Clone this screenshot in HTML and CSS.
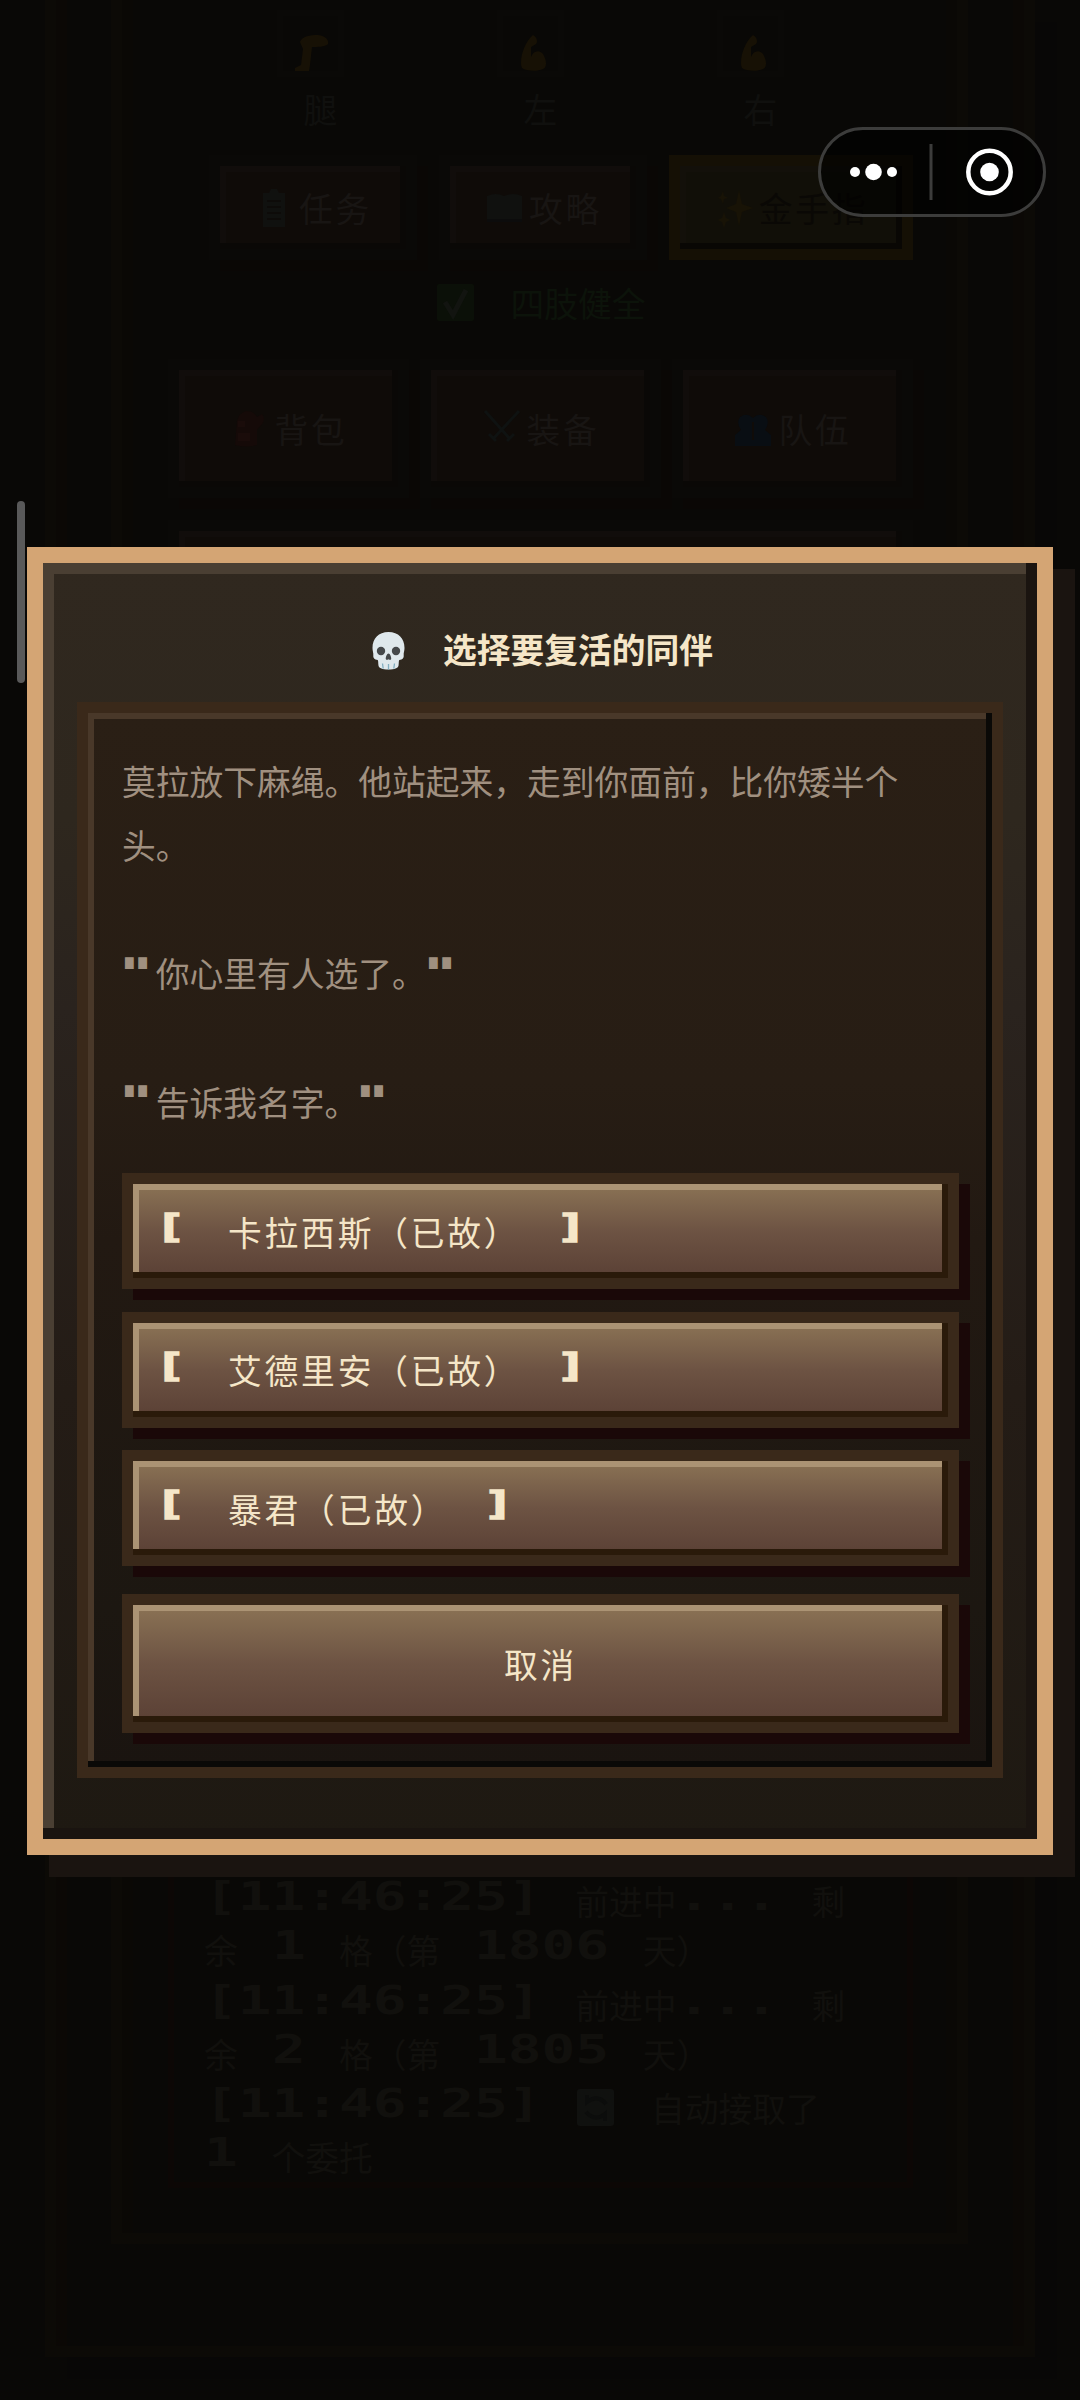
FILE: index.html
```html
<!DOCTYPE html>
<html lang="zh-CN">
<head>
<meta charset="utf-8">
<title>选择要复活的同伴</title>
<link rel="stylesheet" href="styles.css">
</head>
<body>
<div class="app">
  <main class="frame">
    <div class="frame-inner">
      <div class="limbs">
        <div class="limb"><div class="slot"><svg viewBox="0 0 36 36"><path fill="#171105" d="M1 36v-3l6-3 2-16-3-7C8 1 16 0 24 0c8 1 11 5 10 9-3 3-11 3-16 3l-2 18-1 6z"/></svg></div><span>腿</span></div>
        <div class="limb"><div class="slot"><svg viewBox="0 0 36 36"><path fill="#171105" d="M19 0c4 2 5 7 3 9l-5 3v10c2-6 8-8 12-3 4 7 4 13 0 15-6 3-17 2-21-1C5 26 9 9 19 0z"/></svg></div><span>左</span></div>
        <div class="limb"><div class="slot"><svg viewBox="0 0 36 36"><path fill="#171105" d="M19 0c4 2 5 7 3 9l-5 3v10c2-6 8-8 12-3 4 7 4 13 0 15-6 3-17 2-21-1C5 26 9 9 19 0z"/></svg></div><span>右</span></div>
      </div>
      <div class="tools">
        <div class="dim-btn"><svg class="emo" viewBox="0 0 42 40"><path fill="#10110f" d="M9 5h6l2-4h6l2 4h6v34H9z"/><path stroke="#0d0b09" stroke-width="2" d="M13 13h14M13 19h14M13 25h14M13 31h14"/></svg>任务</div>
        <div class="dim-btn"><svg class="emo" viewBox="0 0 42 40"><path fill="#10110f" d="M3 8q9-4 17 0 9-4 18 0v23H3z"/><path fill="#0c0c0c" d="M3 31h35v3H3z"/></svg>攻略</div>
        <div class="dim-btn gold"><svg class="emo" viewBox="0 0 42 40"><path fill="#181306" d="M25 2l3 14 11 4-11 4-3 14-3-14-10-4 10-4zM10 24l2 6 4 2-4 2-2 6-2-6-4-2 4-2zM9 3l1 5 4 2-4 1-1 5-2-5-3-1 3-2z"/></svg>金手指</div>
      </div>
      <div class="health"><svg class="emo" viewBox="0 0 42 40"><rect x="2" y="1" width="37" height="37" rx="2" fill="#0b1008"/><path d="M10 19l8 13L31 7" fill="none" stroke="#121410" stroke-width="5"/></svg>四肢健全</div>
      <div class="menu">
        <div class="dim-btn"><svg class="emo" viewBox="0 0 42 40"><path fill="#150a08" d="M8 12q2-8 9-10 8 0 11 6l5-3q4 5 0 10l-5 6v15q-10 3-22 0z"/><path fill="#1a0c0a" d="M9 12h7v6H9zM9 24h12v8H9z"/></svg>背包</div>
        <div class="dim-btn"><svg class="emo" viewBox="0 0 42 40"><path fill="none" stroke="#0f1211" stroke-width="3" d="M4 2l25 28M38 2L12 30M8 25l7 7M26 32l7-7"/></svg>装备</div>
        <div class="dim-btn"><svg class="emo" viewBox="0 0 42 40"><path fill="#090e13" d="M2 37V26l6-5q-5-7-1-13 7-5 13 1 6-6 13-1 4 6-1 13l6 5v11z"/><path stroke="#100c09" stroke-width="2" d="M20 13v18"/></svg>队伍</div>
      </div>
      <div class="wide-btn"></div>
      <div class="log">
        <p><span class="px n10">[11:46:25]</span><i class="sp"></i>前进中<span class="px n3">...</span><i class="sp"></i>剩</p>
        <p>余<i class="sp"></i><span class="px n1">1</span><i class="sp"></i>格（第<i class="sp"></i><span class="px n4">1806</span><i class="sp"></i>天）</p>
        <p><span class="px n10">[11:46:25]</span><i class="sp"></i>前进中<span class="px n3">...</span><i class="sp"></i>剩</p>
        <p>余<i class="sp"></i><span class="px n1">2</span><i class="sp"></i>格（第<i class="sp"></i><span class="px n4">1805</span><i class="sp"></i>天）</p>
        <p><span class="px n10">[11:46:25]</span><i class="sp"></i><svg class="emo" viewBox="0 0 42 40"><rect x="2" y="1" width="37" height="37" rx="3" fill="#10110f"/><path fill="none" stroke="#0c0d0c" stroke-width="4" d="M31 16q-8-10-19-2V7M11 24q9 10 19 2v7"/></svg><i class="sp"></i>自动接取了</p>
        <p><span class="px n1">1</span><i class="sp"></i>个委托</p>
      </div>
    </div>
  </main>

  <div class="scrollbar"></div>

  <section class="modal">
    <h1><svg class="skull" viewBox="0 0 42 40">
      <path fill="#dfe8ec" d="M21.500 1C11.500 1 5.500 7.500 5.500 17c0 3 1 4.500.800 7-.400 3 1 4.600 4.400 5 .800 1 .300 3 .800 5.800.900 2.700 3.500 3.700 10 3.700s9.100-1 10-3.700c.500-2.800 0-4.800.800-5.800 3.400-.400 4.800-2 4.400-5-.200-2.500.800-4 .800-7C37.500 7.500 31.500 1 21.500 1z"/>
      <circle cx="14" cy="20" r="4.200" fill="#45484a"/><circle cx="29" cy="20" r="4.200" fill="#45484a"/>
      <path fill="#45484a" d="M21.500 22.500c-1.500 0-3 3.800-2.700 5.500.400 1.400 2 .800 2.700.200.700.600 2.300 1.200 2.700-.200.300-1.700-1.200-5.500-2.700-5.500z"/>
      <path stroke="#82aec0" stroke-width="1.300" d="M15.500 32.500l.700 5M21.500 33v5.500M27.500 32.500l-.700 5"/></svg><span>选择要复活的同伴</span></h1>
    <div class="panel">
      <div class="story">
        <p>莫拉放下麻绳。他站起来，走到你面前，比你矮半个头。</p>
        <p><span class="quote">"</span>你心里有人选了。<span class="quote">"</span></p>
        <p><span class="quote">"</span>告诉我名字。<span class="quote">"</span></p>
      </div>
      <div class="choices">
        <button class="btn"><span class="br">[</span><span class="name">卡拉西斯（已故）</span><span class="br close">]</span></button>
        <button class="btn"><span class="br">[</span><span class="name">艾德里安（已故）</span><span class="br close">]</span></button>
        <button class="btn"><span class="br">[</span><span class="name">暴君（已故）</span><span class="br close">]</span></button>
      </div>
      <button class="btn cancel">取消</button>
    </div>
  </section>

  <div class="capsule">
    <svg viewBox="0 0 226 88"><path d="M113 17v56" stroke="#3c3c3b" stroke-width="3"/><g fill="#fff"><circle cx="37" cy="45" r="5"/><circle cx="55.500" cy="45" r="8.300"/><circle cx="74" cy="45" r="5"/><circle cx="171.500" cy="45" r="9.300"/></g><circle cx="171.500" cy="45" r="21.200" fill="none" stroke="#fff" stroke-width="4.500"/></svg>
  </div>
</div>
</body>
</html>
```
FILE: styles.css
```css
* { box-sizing: border-box; }
html, body { margin: 0; }
body {
  width: 1080px;
  height: 2400px;
  overflow: hidden;
  background: #090806;
  font-family: "Noto Sans CJK SC", sans-serif;
  font-size: 33.75px;
}
p, h1 { margin: 0; }
.app { position: relative; width: 1080px; height: 2400px; overflow: hidden; }

/* Dimmed game screen */
.frame {
  width: 990px;
  height: 2357px;
  margin-left: 45px;
  padding: 0 56px 101px 55px;
  border: 11px solid #0c0a06;
  border-top: 0;
  box-shadow: inset 11px 0 #0b0805, inset -11px 0 #0b0805, 22px 22px #080706;
  color: #14110f;
}
.frame-inner {
  height: 2244px;
  padding: 10px 44px 0 46px;
  border: 11px solid #0c0a06;
  border-top: 0;
  box-shadow: inset 11px 0 #0a0805, inset -11px 0 #0a0805;
}
.limbs { display: flex; justify-content: center; gap: 153px; padding-right: 20px; }
.limb { display: flex; flex-direction: column; align-items: center; width: 67px; line-height: 50px; color: #10100e; }
.limb span { margin: 7px -20px 0 0; }
.slot { display: flex; width: 67px; height: 67px; padding: 19px 9px 0 9px; border: 6px solid #0a0907; }
.slot svg { width: 36px; height: 36px; margin-left: 2px; flex: none; }
.tools { display: flex; justify-content: flex-end; gap: 22px; margin-top: 21px; }
.dim-btn {
  display: flex;
  align-items: center;
  justify-content: center;
  width: 208px;
  height: 105px;
  border: 11px solid #0a0907;
  background: #0f0b08;
  box-shadow: inset -6px -6px #0a0806, inset 6px 6px #110d0b, 11px 11px #0a0705;
  color: #181513;
  letter-spacing: 2.8px;
}
.emo { width: 42px; height: 40px; flex: none; margin-right: 3px; }
.dim-btn.gold { width: 244px; border-color: #151005; background: #110f08; color: #0a0805; box-shadow: inset -6px -6px #090704, inset 6px 6px #13100a; }
.health { display: flex; align-items: center; justify-content: center; height: 50px; margin: 17px 0 0; color: #0c130a; }
.health .emo { margin: 2px 33px 0 0; }
.menu { display: flex; gap: 11px; margin-top: 32px; }
.menu .dim-btn { flex: 1; height: 139px; }
.wide-btn { height: 120px; margin-top: 22px; border: 11px solid #0a0907; background: #0f0b08; box-shadow: inset -6px -6px #0a0806, inset 6px 6px #110d0b; }
.log {
  height: 420px;
  margin-top: 1128px;
  padding: 108px 0 0 30px;
  border: 6px solid #0c0705;
  border-top: 0;
  color: #11100d;
}
.log p { display: flex; align-items: center; height: 49px; }
.log p:nth-child(2n) { margin-bottom: 5.500px; }
.log .emo { margin-right: 0; }
.sp { width: 33.75px; flex: none; }
.px {
  display: block;
  height: 49px;
  line-height: 49px;
  font-family: "DejaVu Sans Mono", monospace;
  font-weight: bold;
  font-size: 39px;
  transform: translateY(-4px) scaleX(1.4375);
  transform-origin: left center;
  white-space: pre;
}
.n1 { width: 33.75px; }
.n3 { width: 101.25px; }
.n4 { width: 135px; }
.n10 { width: 337.5px; }

.scrollbar { position: absolute; left: 17px; top: 501px; width: 8px; height: 182px; border-radius: 4px; background: #595959; }

/* Dialog */
.modal {
  position: absolute;
  left: 27px;
  top: 547px;
  width: 1026px;
  height: 1308px;
  padding: 50px 34px 0;
  border: 16px solid #d4a574;
  background: linear-gradient(180deg, #30281f 0%, #2e271e 20%, #2a231e 35%, #241c16 65%, #1e1912 100%);
  box-shadow: inset -11px -11px #1a1410, inset 11px 11px #4a3f33, 22px 22px #1a1410;
}
.modal h1 {
  display: flex;
  align-items: center;
  justify-content: center;
  gap: 34px;
  height: 74px;
  margin-bottom: 15px;
  color: #f5e6c8;
  font-size: 33.75px;
  font-weight: bold;
}
.modal h1 span { margin-top: -3px; }
.skull { width: 42px; height: 40px; margin-top: 2px; }
.panel {
  height: 1076px;
  padding: 36px 33px 0 34px;
  border: 11px solid #3a291a;
  background: linear-gradient(180deg, #2a1f15 0%, #271d14 35%, #221912 50%, #1c1711 85%, #1a1410 100%);
  box-shadow: inset -6px -6px #0a0907, inset 6px 6px #493829;
}
.story { color: #a09080; line-height: 64.125px; }
.story p { min-height: 64.125px; }
.story p + p { margin-top: 64.125px; }
.quote {
  display: inline-block;
  width: 33.75px;
  height: 40px;
  line-height: 40px;
  vertical-align: middle;
  font-family: "DejaVu Sans Mono", monospace;
  font-weight: bold;
  font-size: 38px;
  -webkit-text-stroke: 1.5px #a09080;
  transform: translate(-2px, -6px) scaleX(1.4);
  transform-origin: left center;
}
.choices { display: flex; flex-direction: column; gap: 22.500px; margin-top: 39.400px; }
.btn {
  display: flex;
  align-items: center;
  width: 837px;
  height: 116px;
  padding: 0 22px;
  border: 11px solid #3a291a;
  background: linear-gradient(180deg, #8b7355 0%, #6d5343 50%, #5a4035 100%);
  box-shadow: inset -6px -6px #2a1a0a, inset 6px 6px #ab9374, 11px 11px #1a0808;
  color: #f5e6c8;
  font-family: inherit;
  font-size: 33.75px;
  letter-spacing: 2.8px;
}
.name { margin: 0 36.5px; }
.br {
  width: 36.5px;
  height: 50px;
  line-height: 50px;
  font-family: "DejaVu Sans Mono", monospace;
  font-weight: bold;
  font-size: 32px;
  letter-spacing: 0;
  -webkit-text-stroke: 1.5px #f5e6c8;
  transform: translate(0, -5px) scaleX(1.6);
  transform-origin: left center;
  text-align: left;
}
.br.close { transform: translate(-1px, -5px) scaleX(1.6); }
.cancel { height: 139px; margin-top: 28px; justify-content: center; }

/* System capsule */
.capsule {
  position: absolute;
  left: 818px;
  top: 127px;
  width: 228px;
  height: 90px;
  border: 3px solid #3c3c3b;
  border-radius: 45px;
  background: rgba(0, 0, 0, 0.6);
}
.capsule svg { display: block; width: 226px; height: 88px; margin: -3px; }
```
